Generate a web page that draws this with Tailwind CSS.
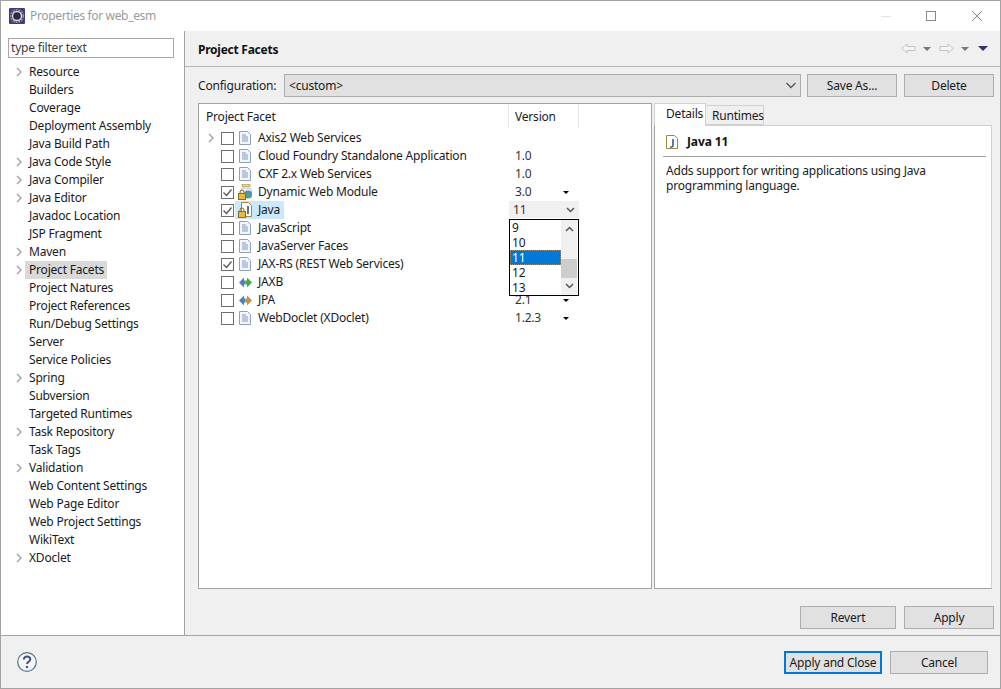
<!DOCTYPE html>
<html lang="en">
<head>
    <meta charset="UTF-8">
    <title>Properties for web_esm</title>
    <script src="https://cdn.jsdelivr.net/npm/@tailwindcss/browser@4"></script>
</head>
<body class="bg-white">
<div class="w-[1001px] h-[689px] flex flex-col border border-[#a3a3a3] overflow-hidden text-[12px] leading-[18px] tracking-[-0.2px] text-[#1a1a1a] font-['Noto_Sans',sans-serif]">

    <!-- title bar -->
    <div class="h-[30px] shrink-0 flex items-center bg-white relative">
        <svg class="ml-[8px] w-[16px] h-[16px]" viewBox="0 0 16 16"><rect width="16" height="16" rx="1" fill="#4b3a78"/><circle cx="8" cy="8" r="6.200" fill="none" stroke="#8f8f9c" stroke-width="1.600" stroke-dasharray="2 1"/><circle cx="8" cy="8" r="5.200" fill="#d8d8de"/><circle cx="8" cy="8" r="3.800" fill="#2c2c38"/></svg>
        <span class="ml-[5px] text-[#9a9a9a] tracking-[-0.35px]">Properties for web_esm</span>
        <div class="ml-auto flex items-center">
            <div class="w-[10px] h-px bg-[#e4e4e4] mr-[35px]"></div>
            <div class="w-[10px] h-[10px] border border-[#8a8a8a] mr-[36px]"></div>
            <svg class="w-[10px] h-[10px] mr-[18px]" viewBox="0 0 10 10"><path d="M0 0l10 10M10 0L0 10" stroke="#8a8a8a" fill="none"/></svg>
        </div>
    </div>

    <div class="flex-1 flex min-h-0">
        <!-- left tree -->
        <div class="w-[184px] shrink-0 bg-white border-r border-[#a3a3a3]">
            <div class="ml-[7px] mt-[7px] w-[166px] h-[20px] border border-[#a9a9a9] pl-[2px] leading-[17px] text-[#3c3c3c]">type filter text</div>
            <div id="tree" class="mt-[5px]"></div>
        </div>

        <!-- right side -->
        <div class="flex-1 bg-[#f0f0f0] flex flex-col">
            <div class="h-[36px] shrink-0 border-b border-[#b4b4b4] flex items-center pl-[13px] pr-[12px]">
                <span class="font-bold text-[#111] tracking-[-0.25px] pt-[3px]">Project Facets</span>
                <div class="ml-auto flex items-center">
                    <svg class="w-[15px] h-[11px]" viewBox="0 0 15 11"><path d="M.8 5.500L6 1v2.500h8v4H6V10z" fill="#f5f5f5" stroke="#c4c4c4"/></svg>
                    <div class="ml-[7px] w-0 h-0 border-x-[4px] border-x-transparent border-t-[4px] border-t-[#777]"></div>
                    <svg class="ml-[8px] w-[15px] h-[11px]" viewBox="0 0 15 11"><path d="M14.200 5.500L9 1v2.500H1v4h8V10z" fill="#f5f5f5" stroke="#c4c4c4"/></svg>
                    <div class="ml-[7px] w-0 h-0 border-x-[4px] border-x-transparent border-t-[4px] border-t-[#777]"></div>
                    <div class="ml-[9px] w-0 h-0 border-x-[5px] border-x-transparent border-t-[5px] border-t-[#3d2f6b]"></div>
                </div>
            </div>

            <div class="flex items-center h-[23px] mt-[7px] pl-[13px] shrink-0">
                <span class="w-[86px] text-[#222]">Configuration:</span>
                <div class="w-[517px] h-[23px] bg-[#e1e1e1] border border-[#adadad] flex items-center pl-[4px] pr-[4px]">
                    <span>&lt;custom&gt;</span>
                    <svg class="ml-auto w-[10px] h-[7px]" viewBox="0 0 10 7"><path d="M.5 1l4.500 4.500L9.500 1" fill="none" stroke="#555" stroke-width="1.300"/></svg>
                </div>
                <div class="ml-[6px] w-[90px] h-[23px] bg-[#e1e1e1] border border-[#adadad] flex items-center justify-center">Save As...</div>
                <div class="ml-[7px] w-[90px] h-[23px] bg-[#e1e1e1] border border-[#adadad] flex items-center justify-center">Delete</div>
            </div>

            <div class="flex h-[486px] mt-[6px] pl-[13px] shrink-0">
                <!-- facets table -->
                <div class="w-[454px] bg-white border border-[#a3a3a3] relative">
                    <div class="flex h-[24px] items-center">
                        <div class="w-[310px] pl-[7px] pt-px h-full flex items-center border-r border-[#e8e8e8]">Project Facet</div>
                        <div class="w-[70px] pl-[6px] pt-px h-full flex items-center border-r border-[#e8e8e8]">Version</div>
                    </div>
                    <div id="facets" class="mt-[1px]"></div>

                    <!-- version dropdown -->
                    <div class="absolute left-[310px] top-[115px] w-[70px] h-[77px] bg-white border border-black flex">
                        <div class="w-[51px] leading-[15px]">
                            <div class="pl-[2px] h-[15px]">9</div>
                            <div class="pl-[2px] h-[15px]">10</div>
                            <div class="pl-[2px] h-[15px] bg-[#0078d7] text-white outline-1 -outline-offset-1 outline-dotted outline-[#f0a040]/60">11</div>
                            <div class="pl-[2px] h-[15px]">12</div>
                            <div class="pl-[2px] h-[15px]">13</div>
                        </div>
                        <div class="w-[16px] ml-auto mr-px bg-[#f0f0f0] flex flex-col items-center">
                            <svg class="mt-[6px] w-[9px] h-[6px]" viewBox="0 0 9 6"><path d="M1 5l3.500-3.500L8 5" fill="none" stroke="#555" stroke-width="1.500"/></svg>
                            <div class="mt-[27px] w-full h-[19px] bg-[#cdcdcd]"></div>
                            <svg class="mt-[5px] w-[9px] h-[6px]" viewBox="0 0 9 6"><path d="M1 1l3.500 3.500L8 1" fill="none" stroke="#555" stroke-width="1.500"/></svg>
                        </div>
                    </div>
                </div>

                <!-- details pane -->
                <div class="ml-[2px] w-[338px] flex flex-col">
                    <div class="flex items-end h-[22px] shrink-0 relative z-10">
                        <div class="w-[52px] h-[23px] -mb-px bg-white border border-b-0 border-[#d0d0d0] pl-[11px] pt-px">Details</div>
                        <div class="w-[58px] h-[20px] bg-[#f0f0f0] border border-l-0 border-[#d0d0d0] pl-[6px] pt-px">Runtimes</div>
                    </div>
                    <div class="flex-1 bg-white border border-[#d0d0d0] border-l-[#a3a3a3] border-b-[#a3a3a3] pt-[1px] pl-[8px] pr-[5px]">
                        <div class="h-[30px] border-b border-[#a0a0a0] flex items-center">
                            <svg class="ml-[3px] w-[12px] h-[14px]" viewBox="0 0 12 14"><path d="M.5.5h8l3 3v10H.5z" fill="#fff" stroke="#a08640"/><path d="M7 4v6.500q0 1.500-1.500 1.500h-1.500" fill="none" stroke="#2f5f9f" stroke-width="1.600"/></svg>
                            <span class="ml-[9px] pt-px font-bold text-[#111] tracking-[-0.1px]">Java 11</span>
                        </div>
                        <p class="mt-[6px] ml-[3px] leading-[15px] w-[300px] text-[#222]">Adds support for writing applications using Java programming language.</p>
                    </div>
                </div>
            </div>

            <div class="flex justify-end h-[23px] mt-[17px] pr-[6px] gap-[8px] shrink-0">
                <div class="w-[96px] bg-[#e1e1e1] border border-[#adadad] flex items-center justify-center">Revert</div>
                <div class="w-[90px] bg-[#e1e1e1] border border-[#adadad] flex items-center justify-center">Apply</div>
            </div>
        </div>
    </div>

    <!-- bottom bar -->
    <div class="h-[53px] shrink-0 bg-[#f0f0f0] border-t border-[#a3a3a3] flex items-center">
        <svg class="ml-[16px] w-[20px] h-[20px]" viewBox="0 0 20 20"><circle cx="10" cy="10" r="9.300" fill="#f6f6f9" stroke="#5a7092" stroke-width="1.200"/><path d="M6.800 7.500q.3-3 3.300-3t3.200 2.700q0 1.700-1.800 2.700-1.400.8-1.400 2" fill="none" stroke="#3f5480" stroke-width="2"/><circle cx="10" cy="15" r="1.200" fill="#3f5480"/></svg>
        <div class="ml-auto w-[98px] h-[23px] pt-px bg-[#e1e1e1] border-2 border-[#0078d7] flex items-center justify-center">Apply and Close</div>
        <div class="ml-[8px] mr-[12px] w-[98px] h-[23px] pt-px bg-[#e1e1e1] border border-[#adadad] flex items-center justify-center">Cancel</div>
    </div>
</div>

<script>
    const chevron = '<svg class="w-[6px] h-[10px]" viewBox="0 0 6 10"><path d="M1 1l4 4-4 4" fill="none" stroke="#a6a6a6" stroke-width="1.500"/></svg>';

    const pages = [
        ['Resource', 1], ['Builders'], ['Coverage'], ['Deployment Assembly'], ['Java Build Path'],
        ['Java Code Style', 1], ['Java Compiler', 1], ['Java Editor', 1], ['Javadoc Location'], ['JSP Fragment'],
        ['Maven', 1], ['Project Facets', 1, 1], ['Project Natures'], ['Project References'], ['Run/Debug Settings'],
        ['Server'], ['Service Policies'], ['Spring', 1], ['Subversion'], ['Targeted Runtimes'],
        ['Task Repository', 1], ['Task Tags'], ['Validation', 1], ['Web Content Settings'], ['Web Page Editor'],
        ['Web Project Settings'], ['WikiText'], ['XDoclet', 1]
    ];
    document.getElementById('tree').innerHTML = pages.map(([name, arrow, selected]) => `
        <div class="h-[18px] flex items-center">
            <div class="w-[15px] shrink-0"></div>
            <div class="w-[10px] shrink-0 flex">${arrow ? chevron : ''}</div>
            <div class="pl-[4px] pr-[3px] -ml-px ${selected ? 'bg-[#d9d9d9]' : ''}">${name}</div>
        </div>`).join('');

    // facet icons
    const page = '<svg class="w-[12px] h-[14px]" viewBox="0 0 12 14"><path d="M.5.5h8l3 3v10H.5z" fill="#f4f6fb" stroke="#8fa0bd"/><path d="M3 4h4M3 6h6M3 8h6M3 10h6" stroke="#7f97c4"/></svg>';
    const lock = '<path d="M2 9.500V8a2 2 0 0 1 4 0v1.500" fill="none" stroke="#8a6d20"/><rect x=".5" y="9.500" width="7" height="6" fill="#e8b93a" stroke="#8a6d20"/>';
    const web = `<svg class="-ml-px w-[15px] h-[16px]" viewBox="0 0 15 16"><rect x="4" y=".5" width="8" height="2" fill="#f0d890" stroke="#a88a3a" stroke-width=".6"/><path d="M4 4h8l1.500 2v7H3V6z" fill="#eef0f4" stroke="#a0a8b8" stroke-width=".6"/><circle cx="10" cy="10.500" r="4" fill="#4a90c8"/><path d="M8 8.500l3 .5 1 3-2 1.500z" fill="#5aa84a"/>${lock}</svg>`;
    const java = `<svg class="-ml-px w-[15px] h-[16px]" viewBox="0 0 15 16"><path d="M3.500.5h7l3 3v11h-10z" fill="#fff" stroke="#a08640"/><path d="M10 4v8" stroke="#2f3f5f" stroke-width="1.500"/>${lock}</svg>`;
    const arrows = (c) => `<svg class="w-[13px] h-[11px]" viewBox="0 0 13 11"><path d="M0 5.500l5-5v3h1.500v4H5v3z" fill="#4f81bd"/><path d="M13 5.500l-5-5v3H6.500v4H8v3z" fill="${c}"/></svg>`;

    const facets = [
        ['Axis2 Web Services', '', page, 0, 0, 1],
        ['Cloud Foundry Standalone Application', '1.0', page, 0],
        ['CXF 2.x Web Services', '1.0', page, 0],
        ['Dynamic Web Module', '3.0', web, 1, 1],
        ['Java', '', java, 1],
        ['JavaScript', '', page, 0],
        ['JavaServer Faces', '', page, 0],
        ['JAX-RS (REST Web Services)', '', page, 1],
        ['JAXB', '', arrows('#3fae49'), 0],
        ['JPA', '2.1', arrows('#c8923a'), 0, 1],
        ['WebDoclet (XDoclet)', '1.2.3', page, 0, 1]
    ];
    document.getElementById('facets').innerHTML = facets.map(([name, version, icon, checked, menu, arrow]) => `
        <div class="h-[18px] flex items-center relative isolate">
            ${name === 'Java' ? '<div class="absolute left-[36px] top-0 w-[49px] h-[18px] bg-[#cce8ff] -z-10"></div>' : ''}
            <div class="w-[9px] shrink-0 ml-[9px] flex">${arrow ? chevron : ''}</div>
            <div class="ml-[4px] w-[13px] h-[13px] shrink-0 bg-white border border-[#6e6e6e] flex items-center justify-center">
                ${checked ? '<svg class="w-[11px] h-[11px]" viewBox="0 0 11 11"><path d="M1.500 5.500l3 3 5-6" fill="none" stroke="#555" stroke-width="1.300"/></svg>' : ''}
            </div>
            <div class="w-[19px] shrink-0 ml-[5px] flex justify-start">${icon}</div>
            <div class="whitespace-nowrap">${name}</div>
            <div class="absolute left-[316px] text-[#333]">${version}</div>
            ${menu ? '<div class="absolute left-[364px] top-[8px] w-0 h-0 border-x-[3px] border-x-transparent border-t-[3px] border-t-black"></div>' : ''}
        </div>`).join('');

    // version combo sitting on the Java row
    const javaRow = document.getElementById('facets').children[4];
    javaRow.insertAdjacentHTML('beforeend', `
        <div class="absolute left-[310px] top-0 w-[70px] h-[17px] bg-[#f0f0f0] flex items-center pl-[4px]">
            <span class="text-[#333]">11</span>
            <svg class="ml-auto mr-[4px] w-[9px] h-[6px]" viewBox="0 0 9 6"><path d="M1 1l3.500 3.500L8 1" fill="none" stroke="#555" stroke-width="1.500"/></svg>
        </div>`);
</script>
</body>
</html>
